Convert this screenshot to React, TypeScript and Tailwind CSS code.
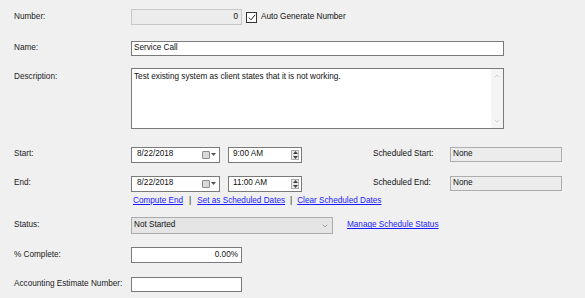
import { ChevronDown, ChevronUp } from "lucide-react";

const font = { fontFamily: '"Segoe UI", "Liberation Sans", Arial, sans-serif' };

function Label({ text, top }: { text: string; top?: boolean }) {
  return (
    <div
      className={`w-[131px] shrink-0 pl-[14px] text-[8.2px] text-[#222] ${top ? "self-start pt-[3px]" : ""}`}
    >
      {text}
    </div>
  );
}

function DateBox({ value }: { value: string }) {
  return (
    <div className="flex h-[16px] w-[89px] items-center justify-between border border-[#7a7a7a] bg-white pl-[5px] pr-[3px]">
      <span>{value}</span>
      <span className="flex items-center gap-[1px]">
        <span className="h-[8px] w-[8px] rounded-[1px] border border-[#8c8c8c] bg-[#d9d9d9]" />
        <svg width="5" height="3" viewBox="0 0 5 3">
          <path d="M0 0h5L2.5 3z" fill="#555" />
        </svg>
      </span>
    </div>
  );
}

function TimeBox({ value }: { value: string }) {
  return (
    <div className="ml-[8px] flex h-[16px] w-[74px] items-center justify-between border border-[#7a7a7a] bg-white pl-[4px] pr-[2px]">
      <span>{value}</span>
      <span className="flex h-[10px] w-[8px] flex-col items-center justify-center border border-[#adadad] bg-[#e8e8e8]">
        <svg width="5" height="8" viewBox="0 0 5 8">
          <path d="M0 3h5L2.5 0z M0 5h5L2.5 8z" fill="#444" />
        </svg>
      </span>
    </div>
  );
}

function Link({ text }: { text: string }) {
  return <span className="text-[#1a1aff] underline">{text}</span>;
}

export default function App() {
  return (
    <div className="h-[298px] w-[585px] overflow-hidden bg-[#f0f0f0] text-[8.2px] text-[#111]" style={font}>
      <div className="flex flex-col pt-[9px]">
        {/* Number */}
        <div className="flex h-[16px] items-center">
          <Label text="Number:" />
          <div className="flex h-[16px] w-[111px] items-center justify-end border border-[#c8c8c8] bg-[#ececec] pr-[3px]">
            0
          </div>
          <div className="ml-[4px] flex h-[11px] w-[11px] items-center justify-center border border-[#333] bg-white">
            <svg width="8" height="7" viewBox="0 0 8 7">
              <path d="M0.8 3.6 L3 5.8 L7.2 0.8" fill="none" stroke="#222" strokeWidth="1" />
            </svg>
          </div>
          <span className="ml-[4px]">Auto Generate Number</span>
        </div>

        {/* Name */}
        <div className="mt-[16px] flex h-[15px] items-center">
          <Label text="Name:" />
          <div className="flex h-[15px] w-[373px] items-center border border-[#7a7a7a] bg-white pl-[2px]">
            Service Call
          </div>
        </div>

        {/* Description */}
        <div className="mt-[12px] flex h-[61px]">
          <Label text="Description:" top />
          <div className="flex h-[61px] w-[373px] border border-[#7a7a7a] bg-white">
            <div className="flex-1 pl-[2px] pt-[2px]">Test existing system as client states that it is not working.</div>
            <div className="flex w-[12px] flex-col items-center justify-between bg-[#f4f4f4] py-[3px] text-[#c0c0c0]">
              <ChevronUp size={8} strokeWidth={2} />
              <ChevronDown size={8} strokeWidth={2} />
            </div>
          </div>
        </div>

        {/* Start */}
        <div className="mt-[18px] flex h-[15px] items-center">
          <Label text="Start:" />
          <DateBox value="8/22/2018" />
          <TimeBox value="9:00 AM" />
          <span className="ml-[71px] w-[77px]">Scheduled Start:</span>
          <div className="flex h-[15px] w-[112px] items-center border border-[#adadad] bg-[#ececec] pl-[2px]">None</div>
        </div>

        {/* End */}
        <div className="mt-[14px] flex h-[15px] items-center">
          <Label text="End:" />
          <DateBox value="8/22/2018" />
          <TimeBox value="11:00 AM" />
          <span className="ml-[71px] w-[77px]">Scheduled End:</span>
          <div className="flex h-[15px] w-[112px] items-center border border-[#adadad] bg-[#ececec] pl-[2px]">None</div>
        </div>

        {/* Links */}
        <div className="mt-[4px] flex h-[12px] items-center pl-[133px]">
          <Link text="Compute End" />
          <span className="mx-[6px]">|</span>
          <Link text="Set as Scheduled Dates" />
          <span className="mx-[5px]">|</span>
          <Link text="Clear Scheduled Dates" />
        </div>

        {/* Status */}
        <div className="mt-[10px] flex h-[17px] items-center">
          <Label text="Status:" />
          <div className="flex h-[17px] w-[202px] items-center justify-between border border-[#acacac] bg-[#e5e5e5] pl-[2px] pr-[3px]">
            <span>Not Started</span>
            <ChevronDown size={8} strokeWidth={1.5} className="text-[#555]" />
          </div>
          <span className="ml-[14px]">
            <Link text="Manage Schedule Status" />
          </span>
        </div>

        {/* % Complete */}
        <div className="mt-[13px] flex h-[16px] items-center">
          <Label text="% Complete:" />
          <div className="flex h-[16px] w-[111px] items-center justify-end border border-[#7a7a7a] bg-white pr-[3px]">
            0.00%
          </div>
        </div>

        {/* Accounting */}
        <div className="mt-[14px] flex h-[15px] items-center">
          <Label text="Accounting Estimate Number:" />
          <div className="h-[15px] w-[111px] border border-[#7a7a7a] bg-white" />
        </div>
      </div>
    </div>
  );
}
